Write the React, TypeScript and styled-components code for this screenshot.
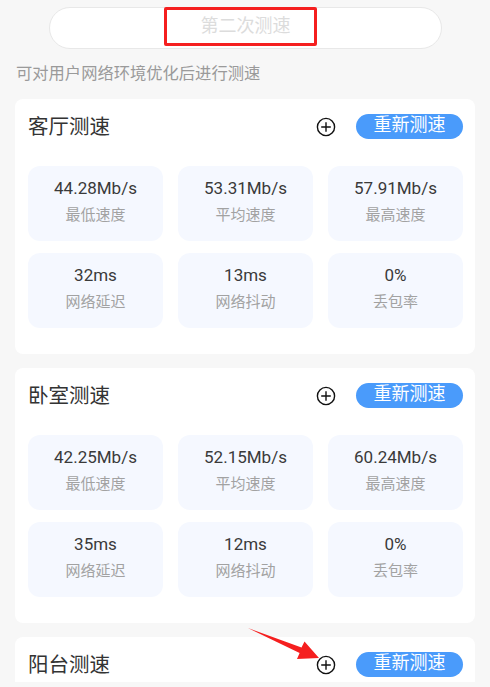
import styled, { createGlobalStyle } from "styled-components";

const GlobalStyle = createGlobalStyle`
  html, body {
    margin: 0;
    padding: 0;
    background: #f7f7f7;
  }
  body {
    font-family: Roboto, "Noto Sans CJK SC", "Noto Sans", sans-serif;
  }
`;

const Page = styled.div`
  position: relative;
  height: 682px;
  overflow: hidden;
  background: #f7f7f7;
  padding: 7px 15px 0 15px;
  box-sizing: border-box;
`;

const TopPill = styled.div`
  position: relative;
  margin: 0 33px 0 34px;
  height: 42px;
  box-sizing: border-box;
  border: 1px solid #e8e8e8;
  border-radius: 21px;
  background: #fff;
  display: flex;
  align-items: center;
  justify-content: center;
  font-size: 18px;
  line-height: 24px;
  color: #dcdcdc;
  padding-bottom: 5px;
`;

// annotation overlay on the screenshot
const RedFrame = styled.div`
  position: absolute;
  left: 114px;
  top: -1px;
  width: 153px;
  height: 39px;
  box-sizing: border-box;
  border: 3px solid #f51f1f;
  border-radius: 2px;
`;

const Hint = styled.p`
  margin: 11px 0 0 1px;
  font-size: 16.3px;
  line-height: 28px;
  color: #9a9a9a;
`;

const CardList = styled.div`
  display: flex;
  flex-direction: column;
  gap: 14px;
  margin-top: 11px;
`;

const Card = styled.section`
  position: relative;
  background: #fff;
  border-radius: 8px;
  padding: 14px 12px 26px 13px;
  height: 255px;
  box-sizing: border-box;
`;

const Header = styled.div`
  display: flex;
  align-items: center;
  height: 28px;
`;

const Title = styled.h2`
  flex: 1;
  margin: 0;
  font-size: 20.5px;
  font-weight: 400;
  color: #333;
  line-height: 28px;
`;

const AddIcon = styled.svg`
  width: 20px;
  height: 20px;
  margin-right: 20px;
`;

const RetestButton = styled.button`
  width: 107px;
  height: 25px;
  border: none;
  border-radius: 13px;
  background: #4a9bfb;
  color: #fff;
  font-family: inherit;
  font-size: 18px;
  line-height: 22px;
  padding: 0 0 3px 0;
  margin-top: -2px;
`;

const Grid = styled.div`
  display: grid;
  grid-template-columns: repeat(3, 1fr);
  column-gap: 15px;
  row-gap: 12px;
  margin-top: 25px;
`;

const Tile = styled.div`
  height: 75px;
  border-radius: 12px;
  background: #f5f8ff;
  display: flex;
  flex-direction: column;
  align-items: center;
  padding-top: 9px;
  box-sizing: border-box;
`;

const Value = styled.div`
  font-size: 17px;
  line-height: 26px;
  color: #3a3a3a;
`;

const Label = styled.div`
  font-size: 15px;
  line-height: 22px;
  color: #a2a2a2;
  margin-top: 3px;
`;

// annotation arrow pointing at the add icon
const Arrow = styled.svg`
  position: absolute;
  left: 230px;
  top: -12px;
  width: 90px;
  height: 50px;
  overflow: visible;
`;

type Stat = { value: string; label: string };

const rooms: { name: string; stats: Stat[] }[] = [
  {
    name: "客厅测速",
    stats: [
      { value: "44.28Mb/s", label: "最低速度" },
      { value: "53.31Mb/s", label: "平均速度" },
      { value: "57.91Mb/s", label: "最高速度" },
      { value: "32ms", label: "网络延迟" },
      { value: "13ms", label: "网络抖动" },
      { value: "0%", label: "丢包率" },
    ],
  },
  {
    name: "卧室测速",
    stats: [
      { value: "42.25Mb/s", label: "最低速度" },
      { value: "52.15Mb/s", label: "平均速度" },
      { value: "60.24Mb/s", label: "最高速度" },
      { value: "35ms", label: "网络延迟" },
      { value: "12ms", label: "网络抖动" },
      { value: "0%", label: "丢包率" },
    ],
  },
  { name: "阳台测速", stats: [] },
];

function PlusCircle() {
  return (
    <AddIcon viewBox="0 0 20 20">
      <circle cx="10" cy="10" r="8.6" fill="none" stroke="#111" strokeWidth="1.4" />
      <path d="M10 5.2v9.6M5.2 10h9.6" stroke="#111" strokeWidth="1.4" />
    </AddIcon>
  );
}

function App() {
  return (
    <Page>
      <GlobalStyle />
      <TopPill>
        第二次测速
        <RedFrame />
      </TopPill>
      <Hint>可对用户网络环境优化后进行测速</Hint>
      <CardList>
        {rooms.map((room, i) => (
          <Card key={room.name}>
            <Header>
              <Title>{room.name}</Title>
              <PlusCircle />
              <RetestButton>重新测速</RetestButton>
            </Header>
            {room.stats.length > 0 && (
              <Grid>
                {room.stats.map((s) => (
                  <Tile key={s.label}>
                    <Value>{s.value}</Value>
                    <Label>{s.label}</Label>
                  </Tile>
                ))}
              </Grid>
            )}
            {i === 2 && (
              <Arrow viewBox="0 0 90 50">
                <path d="M3 3 L56.5 22.6 L59.5 16.5 L74 33 L52 34 L54.6 28 Z" fill="#f51f1f" />
              </Arrow>
            )}
          </Card>
        ))}
      </CardList>
    </Page>
  );
}

export default App;
